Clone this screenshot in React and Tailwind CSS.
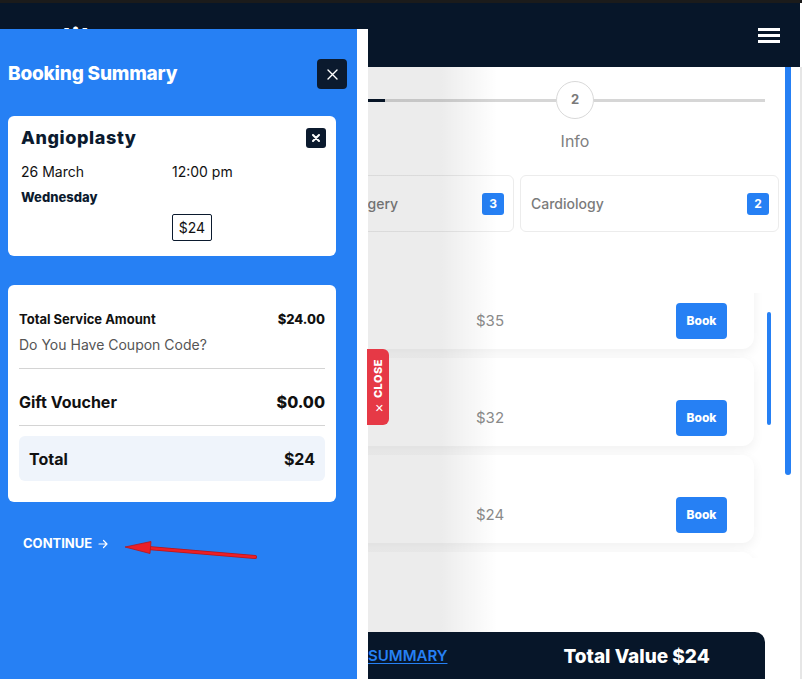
import React from "react";

const font = { fontFamily: 'Inter, "Noto Sans", sans-serif' };

function Row({ price, first, empty }) {
  return (
    <div
      className={`shrink-0 h-[88px] w-[499px] bg-white rounded-xl shadow-[0_4px_12px_rgba(0,0,0,0.06)] flex items-end pb-[10px] pr-[27px] ${first ? "mt-[-32px]" : ""}`}
    >
      {!empty && (
        <>
          <div className="w-[221px]" />
          <div className="flex-1 h-9 flex items-center text-[15px] text-[#8a8a8a]">{price}</div>
          <button className="w-[51px] h-9 rounded-[4px] bg-[#2680f4] text-white text-[12px] font-extrabold">Book</button>
        </>
      )}
    </div>
  );
}

export default function App() {
  return (
    <div className="relative w-[802px] h-[679px] overflow-hidden bg-white" style={font}>
      {/* top strip */}
      <div className="h-[3px] bg-[#1b1b1b]" />
      {/* header */}
      <div className="h-[64px] w-[800px] bg-[#071629] flex items-center justify-between pl-[44px] pr-[20px]">
        <div className="text-white text-[30px] font-bold tracking-[1px] mt-[8px]">alibtes</div>
        <div className="flex flex-col gap-[3px]">
          <div className="w-[22px] h-[3px] bg-white" />
          <div className="w-[22px] h-[3px] bg-white" />
          <div className="w-[22px] h-[3px] bg-white" />
        </div>
      </div>

      {/* main content */}
      <div className="pl-[255px] pt-[14px]">
        {/* stepper */}
        <div className="flex items-start w-[510px]">
          <div className="w-[301px] h-[3px] mt-[18px] bg-[#d6d6d6] flex">
            <div className="w-[130px] h-[3px] bg-[#071629]" />
          </div>
          <div className="w-[38px] flex flex-col items-center">
            <div className="w-[38px] h-[38px] rounded-full border border-[#d9d9d9] bg-white flex items-center justify-center text-[13px] font-bold text-[#7a7a7a]">2</div>
            <div className="mt-[10px] text-[16px] text-[#808080] whitespace-nowrap">Info</div>
          </div>
          <div className="flex-1 h-[3px] mt-[18px] bg-[#d6d6d6]" />
        </div>

        {/* categories */}
        <div className="mt-[22px] grid grid-cols-[259px_259px] gap-[6px]">
          <div className="h-[57px] rounded-md border border-[#ececec] bg-white flex items-center justify-between pl-[10px] pr-[9px]">
            <span className="text-[14px] font-medium text-[#7b7b7b]">Orthopedic Surgery</span>
            <span className="w-[22px] h-[22px] rounded-[3px] bg-[#2680f4] text-white text-[12px] font-bold flex items-center justify-center">3</span>
          </div>
          <div className="h-[57px] rounded-md border border-[#ececec] bg-white flex items-center justify-between pl-[10px] pr-[9px]">
            <span className="text-[14px] font-medium text-[#7b7b7b]">Cardiology</span>
            <span className="w-[22px] h-[22px] rounded-[3px] bg-[#2680f4] text-white text-[12px] font-bold flex items-center justify-center">2</span>
          </div>
        </div>

        {/* service list */}
        <div className="mt-[61px] flex">
          <div className="h-[265px] w-[510px] overflow-hidden flex flex-col gap-[9px]">
            <Row price="$35" first />
            <Row price="$32" />
            <Row price="$24" />
            <Row empty />
          </div>
          <div className="mt-[19px] ml-[2px] w-[4px] h-[113px] rounded-full bg-[#2680f4]" />
        </div>
      </div>

      {/* fade overlay */}
      <div className="absolute left-0 right-0 top-[67px] bottom-0 pointer-events-none bg-linear-to-r from-[rgba(0,0,0,0.075)] from-[55%] to-transparent to-[62%]" />

      {/* outer scrollbar */}
      <div className="absolute left-[785px] top-[67px] w-[6px] h-[408px] rounded-b-full bg-[#2680f4]" />
      <div className="absolute left-[800px] top-[67px] w-[2px] bottom-0 bg-[#e6e6e6]" />

      {/* bottom bar */}
      <div className="absolute left-0 top-[632px] w-[765px] h-[60px] bg-[#071629] rounded-tr-[10px] flex items-start pt-[11px]">
        <span className="ml-[368px] mt-[2px] text-[#2680f4] text-[15px] font-semibold underline underline-offset-2">SUMMARY</span>
        <span className="ml-[116px] text-white text-[19px] font-extrabold tracking-[0px]">Total Value $24</span>
      </div>

      {/* drawer */}
      <div className="absolute left-0 top-[29px] bottom-0 w-[368px] bg-[#2680f4] border-r-[11px] border-white">
        <div className="pl-[8px] pr-[10px] pt-[30px] flex items-center justify-between">
          <h2 className="text-white text-[19px] font-extrabold tracking-[-0.2px]">Booking Summary</h2>
          <button className="w-[30px] h-[30px] rounded-[4px] bg-[#0b1a2e] flex items-center justify-center">
            <svg width="11" height="11" viewBox="0 0 11 11" stroke="white" strokeWidth="1.4" strokeLinecap="round">
              <path d="M1 1L10 10M10 1L1 10" />
            </svg>
          </button>
        </div>

        {/* service card */}
        <div className="ml-[8px] mt-[27px] w-[328px] h-[140px] bg-white rounded-md pl-[13px] pr-[10px] pt-[10px]">
          <div className="flex items-center justify-between">
            <span className="text-[18px] font-extrabold text-[#0b1a2e] tracking-[0.6px] leading-[24px]">Angioplasty</span>
            <button className="w-[20px] h-[20px] rounded-[3px] bg-[#0b1a2e] flex items-center justify-center">
              <svg width="8" height="8" viewBox="0 0 8 8" stroke="white" strokeWidth="2" strokeLinecap="round">
                <path d="M1 1L7 7M7 1L1 7" />
              </svg>
            </button>
          </div>
          <div className="mt-[12px] grid grid-cols-[151px_1fr] text-[14px] leading-[20px] text-[#111]">
            <span>26 March</span>
            <span>12:00 pm</span>
          </div>
          <div className="mt-[5px] text-[13px] leading-[20px] font-extrabold text-[#0b1a2e]">Wednesday</div>
          <div className="ml-[151px] mt-[7px] w-[40px] h-[27px] border border-[#0b1a2e] rounded-[2px] flex items-center justify-center text-[14px] text-[#111]">$24</div>
        </div>

        {/* totals card */}
        <div className="ml-[8px] mt-[29px] w-[328px] h-[217px] bg-white rounded-md px-[11px] pt-[24px]">
          <div className="flex items-center justify-between leading-[20px]">
            <span className="text-[13px] font-bold text-[#111]">Total Service Amount</span>
            <span className="text-[13px] font-extrabold text-[#111]">$24.00</span>
          </div>
          <div className="mt-[6px] text-[14px] leading-[20px] text-[#555]">Do You Have Coupon Code?</div>
          <div className="mt-[13px] h-px bg-[#d4d4d4]" />
          <div className="h-[56px] pt-[21px] flex items-start justify-between leading-[24px]">
            <span className="text-[16px] font-bold text-[#111]">Gift Voucher</span>
            <span className="text-[16px] font-extrabold text-[#111]">$0.00</span>
          </div>
          <div className="h-px bg-[#d4d4d4]" />
          <div className="mt-[10px] h-[45px] rounded-md bg-[#eff4fb] px-[10px] flex items-center justify-between">
            <span className="text-[16px] font-bold text-[#111]">Total</span>
            <span className="text-[16px] font-bold text-[#111]">$24</span>
          </div>
        </div>

        <div className="ml-[23px] mt-[32px] flex items-center gap-[6px] text-white text-[13px] font-bold">
          <span>CONTINUE</span>
          <svg width="10" height="10" viewBox="0 0 10 10" fill="none" stroke="white" strokeWidth="1.2" strokeLinecap="round" strokeLinejoin="round">
            <path d="M1 5H9M5.5 1.5L9 5L5.5 8.5" />
          </svg>
        </div>
      </div>

      {/* close tab */}
      <div className="absolute left-[367px] top-[349px] w-[22px] h-[76px] bg-[#e63946] rounded-r-md flex items-center justify-center">
        <span className="[writing-mode:vertical-rl] rotate-180 text-white text-[11px] font-extrabold tracking-[0.5px] whitespace-nowrap">
          <span className="font-normal">✕</span> CLOSE
        </span>
      </div>

      {/* red annotation arrow */}
      <svg className="absolute left-[120px] top-[538px]" width="140" height="24" viewBox="0 0 140 24">
        <path d="M135 19L28 10" stroke="#b4161d" strokeWidth="4" strokeLinecap="round" />
        <path d="M135 19L28 10" stroke="#ec1f26" strokeWidth="2.4" strokeLinecap="round" />
        <path d="M5 9L31 3.5L30 15.5Z" fill="#ec1f26" stroke="#b4161d" strokeWidth="0.8" />
      </svg>
    </div>
  );
}
